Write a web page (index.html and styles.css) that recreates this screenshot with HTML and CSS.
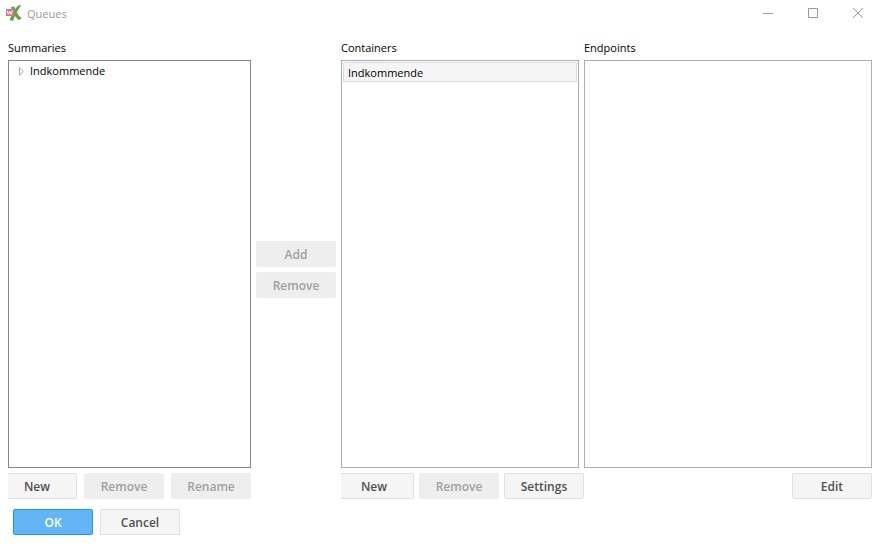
FILE: index.html
```html
<!DOCTYPE html>
<html lang="da">

<head>
    <meta charset="UTF-8">
    <meta name="viewport" content="width=device-width, initial-scale=1.0">
    <title>Queues</title>
    <link rel="stylesheet" href="styles.css">
</head>

<body>

    <header class="titlebar">
        <svg class="logo" width="16" height="16" viewBox="0 0 16 16" aria-hidden="true">
            <path d="M5 2 L8.500 1.500 C9.500 6 12 10.500 15.800 13.500 L12.500 15 C8.500 11.500 6 7 5 2 Z" fill="#6b9d50"/>
            <path d="M12 0.500 L15.500 0 C13 3 11.500 6 10 9 C8.800 11 7.800 13.500 7 16 L3.500 15 C5.500 10.500 8 5 12 0.500 Z" fill="#5fa544"/>
            <rect x="0" y="4" width="8" height="7" fill="#d86c94"/>
            <path d="M1 5.500 L2.300 9.500 L3.700 6 L5.100 9.500 L6.500 5.500" fill="none" stroke="#fff" stroke-width="1"/>
        </svg>
        <h1>Queues</h1>
        <div class="window-controls">
            <button type="button" aria-label="Minimize">
                <svg width="10" height="10" viewBox="0 0 10 10"><path d="M0 5.500 H10"/></svg>
            </button>
            <button type="button" aria-label="Maximize">
                <svg width="10" height="10" viewBox="0 0 10 10"><path d="M0.500 0.500 H9.500 V9.500 H0.500 Z"/></svg>
            </button>
            <button type="button" aria-label="Close">
                <svg width="10" height="10" viewBox="0 0 10 10"><path d="M0 0 L10 10 M10 0 L0 10"/></svg>
            </button>
        </div>
    </header>

    <main>
        <section class="panel summaries">
            <h2>Summaries</h2>
            <ul class="list tree">
                <li>
                    <svg width="5" height="9" viewBox="0 0 5 9" aria-hidden="true"><path d="M0.500 0.800 L4.300 4.500 L0.500 8.200 Z"/></svg>
                    <span>Indkommende</span>
                </li>
            </ul>
            <div class="actions">
                <button type="button" class="btn">New</button>
                <button type="button" class="btn" disabled>Remove</button>
                <button type="button" class="btn" disabled>Rename</button>
            </div>
        </section>

        <div class="transfer">
            <button type="button" class="btn" disabled>Add</button>
            <button type="button" class="btn" disabled>Remove</button>
        </div>

        <section class="panel containers">
            <h2>Containers</h2>
            <ul class="list">
                <li class="selected">Indkommende</li>
            </ul>
            <div class="actions">
                <button type="button" class="btn">New</button>
                <button type="button" class="btn" disabled>Remove</button>
                <button type="button" class="btn">Settings</button>
            </div>
        </section>

        <section class="panel endpoints">
            <h2>Endpoints</h2>
            <ul class="list"></ul>
            <div class="actions">
                <button type="button" class="btn">Edit</button>
            </div>
        </section>
    </main>

    <footer>
        <button type="submit" class="btn primary">OK</button>
        <button type="button" class="btn">Cancel</button>
    </footer>

</body>
</html>
```
FILE: styles.css
```css
* {
    box-sizing: border-box;
}

body {
    display: flex;
    flex-direction: column;
    height: 100vh;
    margin: 0;
    background-color: #fff;
    color: #000;
    font-family: "Open Sans", "Noto Sans", sans-serif;
    font-size: 11px;
    line-height: 16px;
}

h1, h2 {
    margin: 0;
    font-size: 11px;
    font-weight: normal;
}

/* title bar */
.titlebar {
    display: flex;
    align-items: center;
    height: 26px;
    padding-left: 6px;
}

.titlebar h1 {
    margin-left: 5px;
    padding-top: 2px;
    color: #999;
}

.window-controls {
    display: flex;
    margin-left: auto;
    padding-right: 1px;
}

.window-controls button {
    display: flex;
    align-items: center;
    justify-content: center;
    width: 45px;
    height: 26px;
    padding: 0;
    border: 0;
    background: none;
}

.window-controls path {
    fill: none;
    stroke: #999;
}

/* panels */
main {
    display: grid;
    grid-template-columns: 243fr 90px 243fr 288fr;
    flex: 1;
    min-height: 0;
    padding: 14px 9px 0 8px;
}

.panel {
    display: flex;
    flex-direction: column;
    min-width: 0;
}

.panel h2 {
    margin-bottom: 4px;
}

.list {
    flex: 1;
    margin: 0;
    padding: 1px;
    border: 1px solid #abadb3;
    list-style: none;
}

.tree {
    border-color: #828790;
}

.tree li {
    display: flex;
    align-items: center;
    gap: 6px;
    padding-left: 9px;
    line-height: 18px;
}

.tree path {
    fill: #fff;
    stroke: #a6a6a6;
}

.containers .list {
    margin-right: 5px;
}

.selected {
    padding: 2px 4px 0;
    border: 1px solid #dadada;
    background-color: #f5f5f5;
}

.actions {
    display: flex;
    justify-content: flex-end;
    gap: 5px;
    margin-top: 5px;
    overflow: hidden;
}

.summaries .actions {
    gap: 7px;
}

.transfer {
    display: flex;
    flex-direction: column;
    align-items: center;
    justify-content: center;
    gap: 5px;
}

/* buttons */
.btn {
    flex: none;
    width: 80px;
    height: 26px;
    padding: 2px 0 0;
    border: 1px solid #e0e0e0;
    border-radius: 2px;
    background-color: #f5f5f5;
    color: #505050;
    font-family: inherit;
    font-size: 12px;
    font-weight: 600;
    line-height: 16px;
}

.btn:disabled {
    border-color: #eee;
    background-color: #eee;
    color: #a0a0a0;
}

.btn.primary {
    border-color: #2196f3;
    background-color: #64b5f6;
    color: #fff;
}

footer {
    display: flex;
    gap: 7px;
    padding: 10px 13px 14px;
}
```
